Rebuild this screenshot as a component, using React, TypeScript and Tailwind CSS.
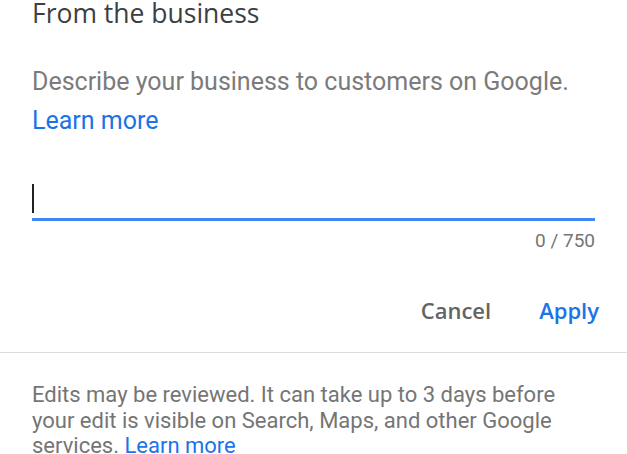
export default function App() {
  return (
    <div className="w-[627px] h-[454px] overflow-hidden bg-white font-['Roboto',sans-serif]">
      <div className="px-8">
        <h2 className="text-[26.5px] leading-[26px] text-[#3c4043] font-['Open_Sans','Roboto',sans-serif]">
          From the business
        </h2>
        <p className="mt-[36px] text-[25px] leading-[39px] text-[#7b7b7b]">
          Describe your business to customers on Google.
        </p>
        <a className="block text-[25px] leading-[39px] text-[#1a73e8]">Learn more</a>

        {/* Input */}
        <div className="mt-[44px]">
          <div className="h-[34px] flex items-start">
            <span className="w-[2px] h-[29px] bg-[#202124]" />
          </div>
          <div className="h-[3px] bg-[#4285f4]" />
          <div className="mt-[10px] text-right text-[19px] leading-[20px] text-[#757575]">0 / 750</div>
        </div>

        <div className="mt-[47px] mr-[-4px] flex justify-end items-center gap-[48px] text-[22px] leading-[24px] font-semibold font-['Open_Sans','Roboto',sans-serif]">
          <button className="text-[#646464]">Cancel</button>
          <button className="text-[#1a73e8]">Apply</button>
        </div>
      </div>

      <div className="mt-[30px] h-[1px] bg-[#dadce0]" />

      <p className="pl-8 pt-[29px] w-[592px] text-[22px] leading-[25.5px] text-[#757575]">
        Edits may be reviewed. It can take up to 3 days before your edit is visible on Search, Maps, and other Google
        services. <a className="text-[#1a73e8]">Learn more</a>
      </p>
    </div>
  );
}
